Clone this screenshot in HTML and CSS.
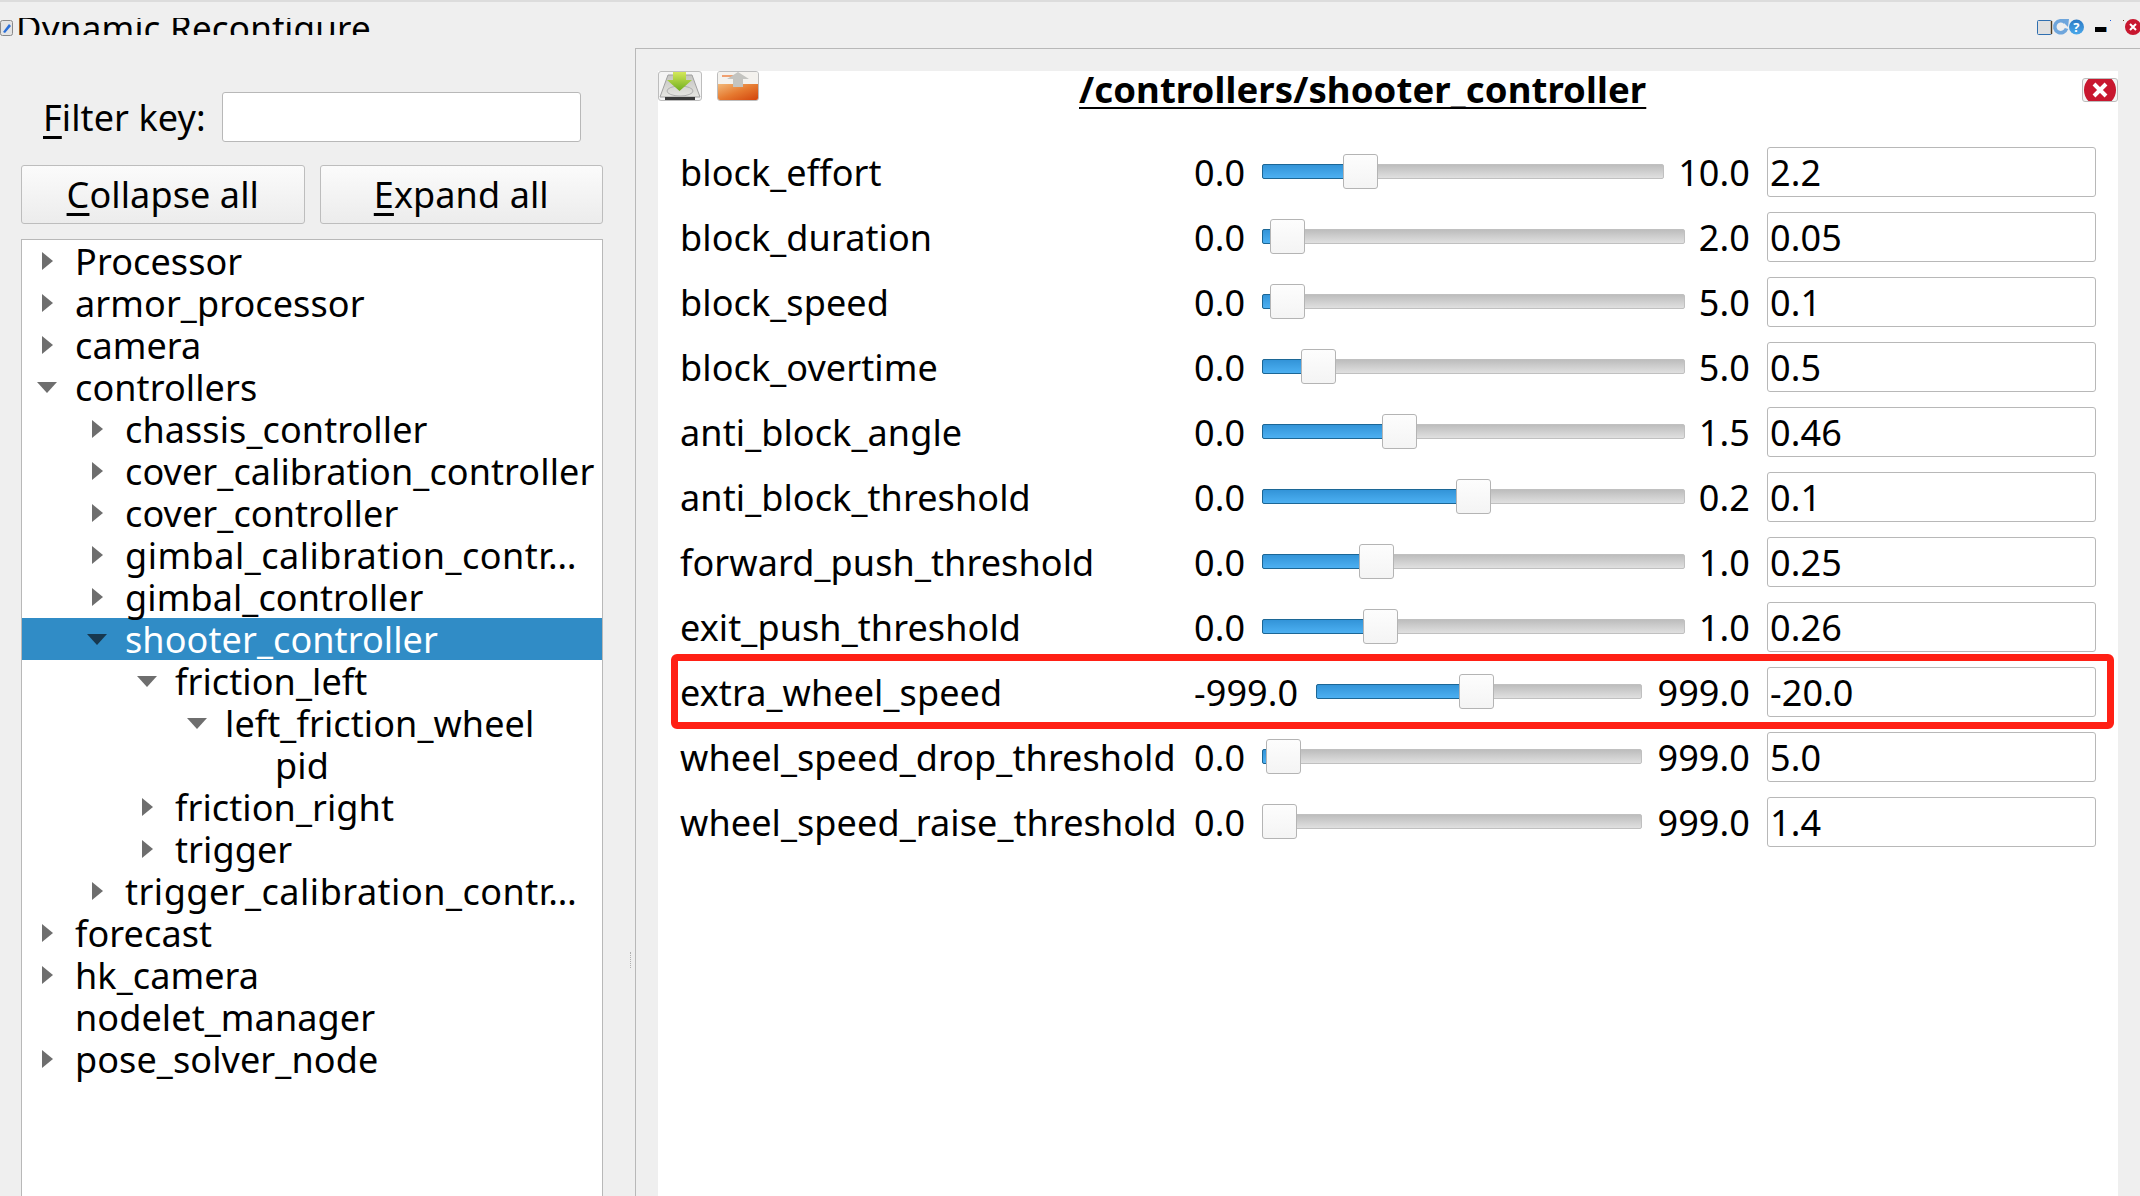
FILE: index.html
```html
<!DOCTYPE html>
<html>
<head>
    <title>Dynamic Reconfigure</title>
    <link rel="stylesheet" href="styles.css">
</head>
<body>
    <div class="window">
        <div class="titlebar">
            <svg class="app-icon" width="13" height="17" viewBox="0 0 13 17">
                <rect x="0.5" y="0.5" width="12" height="15" rx="2" fill="#e4e4e4" stroke="#8a8a8a"/>
                <path d="M3 12 L9 4 L11 6 L5 13 Z" fill="#2a6fd8"/>
            </svg>
            <div class="title-clip"><div class="title-text">Dynamic Reconfigure</div></div>
            <svg class="win-icons" width="105" height="20" viewBox="0 0 105 20">
                <defs>
                    <linearGradient id="helpBlue" x1="0" y1="0" x2="0" y2="1">
                        <stop offset="0" stop-color="#2a78c4"/>
                        <stop offset="1" stop-color="#4aa8ea"/>
                    </linearGradient>
                </defs>
                <rect x="2.5" y="2.5" width="14" height="14" rx="1" fill="#e0e0e0" stroke="#2f6fb0"/>
                <path d="M16.5 3 V16" stroke="#4a3a20" stroke-width="1.4"/>
                <path d="M30 4.5 A6 6 0 1 0 31.5 10.5" fill="none" stroke="#6fa6dc" stroke-width="3.6"/>
                <path d="M25 1 L34 1 L33 9 Z" fill="#6fa6dc"/>
                <circle cx="41.5" cy="9" r="7.5" fill="url(#helpBlue)"/>
                <text class="help-mark" x="41.5" y="13.5">?</text>
                <rect x="60" y="9" width="11" height="5" fill="#000"/>
                <rect x="71" y="9" width="1" height="5" fill="#4a90d0"/>
                <rect x="75" y="2" width="1" height="1" fill="#2060e0"/>
                <rect x="88" y="2" width="1" height="1" fill="#6a4a20"/>
                <circle cx="98" cy="9" r="8" fill="#c8172f"/>
                <path d="M95 6 L101 12 M101 6 L95 12" stroke="#fff" stroke-width="2"/>
            </svg>
        </div>

        <div class="main">
            <div class="left">
                <div class="filter">
                    <label class="filter-label"><u>F</u>ilter key:</label>
                    <input class="filter-input" type="text">
                </div>
                <div class="buttons">
                    <button class="btn"><u>C</u>ollapse all</button>
                    <button class="btn"><u>E</u>xpand all</button>
                </div>
                <div class="tree">
                    <div class="node"><span class="arrow closed"></span>Processor</div>
                    <div class="node"><span class="arrow closed"></span>armor_processor</div>
                    <div class="node"><span class="arrow closed"></span>camera</div>
                    <div class="node"><span class="arrow open"></span>controllers</div>
                    <div class="node level1"><span class="arrow closed"></span>chassis_controller</div>
                    <div class="node level1"><span class="arrow closed"></span>cover_calibration_controller</div>
                    <div class="node level1"><span class="arrow closed"></span>cover_controller</div>
                    <div class="node level1 truncated"><span class="arrow closed"></span>gimbal_calibration_contr…</div>
                    <div class="node level1"><span class="arrow closed"></span>gimbal_controller</div>
                    <div class="node level1 selected"><span class="arrow open"></span>shooter_controller</div>
                    <div class="node level2"><span class="arrow open"></span>friction_left</div>
                    <div class="node level3"><span class="arrow open"></span>left_friction_wheel</div>
                    <div class="node level4"><span class="arrow"></span>pid</div>
                    <div class="node level2"><span class="arrow closed"></span>friction_right</div>
                    <div class="node level2"><span class="arrow closed"></span>trigger</div>
                    <div class="node level1 truncated"><span class="arrow closed"></span>trigger_calibration_contr…</div>
                    <div class="node"><span class="arrow closed"></span>forecast</div>
                    <div class="node"><span class="arrow closed"></span>hk_camera</div>
                    <div class="node"><span class="arrow"></span>nodelet_manager</div>
                    <div class="node"><span class="arrow closed"></span>pose_solver_node</div>
                </div>
                <div class="splitter"></div>
            </div>

            <div class="right">
                <div class="panel">
                    <div class="header">
                        <button class="icon-btn">
                            <svg width="42" height="28" viewBox="0 0 42 28">
                                <defs>
                                    <linearGradient id="driveGrey" x1="0" y1="0" x2="0" y2="1">
                                        <stop offset="0" stop-color="#c4c4c0"/>
                                        <stop offset="1" stop-color="#e6e6e2"/>
                                    </linearGradient>
                                    <linearGradient id="arrowGreen" x1="0" y1="0" x2="0" y2="1">
                                        <stop offset="0" stop-color="#d4e85a"/>
                                        <stop offset="1" stop-color="#6fae1e"/>
                                    </linearGradient>
                                </defs>
                                <path d="M9 3 H33 L41 25 H1 Z" fill="url(#driveGrey)" stroke="#a0a0a0"/>
                                <ellipse cx="21" cy="19" rx="13" ry="5" fill="none" stroke="#b0b0b0"/>
                                <rect x="6" y="25" width="30" height="3" fill="#3a3a3a"/>
                                <path d="M14 0 H27 V8 H33 L20.5 19 L8 8 H14 Z" fill="url(#arrowGreen)"/>
                            </svg>
                        </button>
                        <button class="icon-btn folder">
                            <svg width="40" height="28" viewBox="0 0 40 28">
                                <defs>
                                    <linearGradient id="folderOrange" x1="0" y1="0" x2="1" y2="1">
                                        <stop offset="0" stop-color="#f2b878"/>
                                        <stop offset="0.5" stop-color="#e67a30"/>
                                        <stop offset="1" stop-color="#d2440c"/>
                                    </linearGradient>
                                </defs>
                                <rect x="0" y="0" width="40" height="13" fill="#f4f2ee"/>
                                <rect x="4" y="3" width="11" height="2" fill="#f0a070"/>
                                <rect x="0" y="12" width="40" height="16" fill="url(#folderOrange)"/>
                                <path d="M20 0 L31 7 H25 V15 H15 V7 H9 Z" fill="#c4c4c0"/>
                            </svg>
                        </button>
                        <div class="panel-title">/controllers/shooter_controller</div>
                        <button class="close-btn">
                            <svg width="34" height="22" viewBox="0 0 34 22">
                                <circle cx="17" cy="11" r="16" fill="#c8172f"/>
                                <path d="M11 5 L23 17 M23 5 L11 17" stroke="#fff" stroke-width="4"/>
                            </svg>
                        </button>
                    </div>

                    <div class="rows">
                        <div class="row">
                            <span class="name">block_effort</span>
                            <span class="min">0.0</span>
                            <div class="slider"><div class="fill" style="width:84px"></div><div class="handle" style="left:80px"></div></div>
                            <span class="max max-mid">10.0</span>
                            <input class="value" type="text" value="2.2">
                        </div>
                        <div class="row">
                            <span class="name">block_duration</span>
                            <span class="min">0.0</span>
                            <div class="slider"><div class="fill" style="width:11px"></div><div class="handle" style="left:7px"></div></div>
                            <span class="max">2.0</span>
                            <input class="value" type="text" value="0.05">
                        </div>
                        <div class="row">
                            <span class="name">block_speed</span>
                            <span class="min">0.0</span>
                            <div class="slider"><div class="fill" style="width:11px"></div><div class="handle" style="left:7px"></div></div>
                            <span class="max">5.0</span>
                            <input class="value" type="text" value="0.1">
                        </div>
                        <div class="row">
                            <span class="name">block_overtime</span>
                            <span class="min">0.0</span>
                            <div class="slider"><div class="fill" style="width:42px"></div><div class="handle" style="left:38px"></div></div>
                            <span class="max">5.0</span>
                            <input class="value" type="text" value="0.5">
                        </div>
                        <div class="row">
                            <span class="name">anti_block_angle</span>
                            <span class="min">0.0</span>
                            <div class="slider"><div class="fill" style="width:123px"></div><div class="handle" style="left:119px"></div></div>
                            <span class="max">1.5</span>
                            <input class="value" type="text" value="0.46">
                        </div>
                        <div class="row">
                            <span class="name">anti_block_threshold</span>
                            <span class="min">0.0</span>
                            <div class="slider"><div class="fill" style="width:197px"></div><div class="handle" style="left:193px"></div></div>
                            <span class="max">0.2</span>
                            <input class="value" type="text" value="0.1">
                        </div>
                        <div class="row">
                            <span class="name">forward_push_threshold</span>
                            <span class="min">0.0</span>
                            <div class="slider"><div class="fill" style="width:100px"></div><div class="handle" style="left:96px"></div></div>
                            <span class="max">1.0</span>
                            <input class="value" type="text" value="0.25">
                        </div>
                        <div class="row">
                            <span class="name">exit_push_threshold</span>
                            <span class="min">0.0</span>
                            <div class="slider"><div class="fill" style="width:104px"></div><div class="handle" style="left:100px"></div></div>
                            <span class="max">1.0</span>
                            <input class="value" type="text" value="0.26">
                        </div>
                        <div class="row highlighted">
                            <span class="name">extra_wheel_speed</span>
                            <span class="min min-wide">-999.0</span>
                            <div class="slider"><div class="fill" style="width:146px"></div><div class="handle" style="left:142px"></div></div>
                            <span class="max max-wide">999.0</span>
                            <input class="value" type="text" value="-20.0">
                        </div>
                        <div class="row">
                            <span class="name">wheel_speed_drop_threshold</span>
                            <span class="min">0.0</span>
                            <div class="slider"><div class="fill" style="width:7px"></div><div class="handle" style="left:3px"></div></div>
                            <span class="max max-wide">999.0</span>
                            <input class="value" type="text" value="5.0">
                        </div>
                        <div class="row">
                            <span class="name">wheel_speed_raise_threshold</span>
                            <span class="min">0.0</span>
                            <div class="slider"><div class="handle" style="left:-1px"></div></div>
                            <span class="max max-wide">999.0</span>
                            <input class="value" type="text" value="1.4">
                        </div>
                    </div>
                </div>
            </div>
        </div>
    </div>
</body>
</html>
```
FILE: styles.css
```css
body {
    margin: 0;
    font-family: "Noto Sans", sans-serif;
    font-size: 36px;
    letter-spacing: 0.1px;
    color: #000;
    background-color: #efefef;
}
.window {
    width: 2140px;
    height: 1196px;
    overflow: hidden;
    display: flex;
    flex-direction: column;
    box-sizing: border-box;
    border-top: 2px solid #dcdcdc;
}
.titlebar {
    height: 46px;
    flex: none;
    display: flex;
    align-items: flex-start;
    padding-top: 16px;
    box-sizing: border-box;
}
.app-icon {
    flex: none;
    margin-top: 2px;
    margin-right: 3px;
}
.title-clip {
    height: 17px;
    overflow: hidden;
}
.title-text {
    margin-top: -10px;
    font-size: 35px;
    letter-spacing: 0.2px;
    line-height: 40px;
    white-space: nowrap;
}
.win-icons {
    margin-left: auto;
    flex: none;
}
.help-mark {
    font-size: 13px;
    font-weight: bold;
    fill: #fff;
    text-anchor: middle;
}
.main {
    flex: 1;
    display: flex;
    min-height: 0;
}
.left {
    width: 635px;
    flex: none;
    box-sizing: border-box;
    padding-left: 21px;
    position: relative;
    display: flex;
    flex-direction: column;
}
.filter {
    display: flex;
    align-items: center;
    margin-top: 44px;
    height: 50px;
}
.filter-label {
    width: 178px;
    padding-left: 22px;
    box-sizing: border-box;
    flex: none;
    white-space: nowrap;
}
.filter-input {
    width: 359px;
    height: 50px;
    box-sizing: border-box;
    margin-left: 23px;
    border: 1px solid #b8b8b8;
    border-radius: 3px;
    background-color: #fff;
}
.buttons {
    display: flex;
    gap: 15px;
    margin-top: 23px;
    width: 582px;
}
.btn {
    flex: 1;
    height: 59px;
    padding: 0;
    font-family: inherit;
    font-size: 36px;
    letter-spacing: inherit;
    color: #000;
    border: 1px solid #bdbdbd;
    border-radius: 3px;
    background: linear-gradient(#fbfbfb, #ececec);
}
u {
    text-underline-offset: 5px;
    text-decoration-thickness: 3px;
}
.tree {
    flex: 1;
    width: 582px;
    box-sizing: border-box;
    margin-top: 15px;
    background-color: #fff;
    border: 1px solid #b8b8b8;
    border-bottom: none;
}
.node {
    height: 42px;
    display: flex;
    align-items: center;
    padding-left: 14px;
    white-space: nowrap;
}
.level1 { padding-left: 64px; }
.level2 { padding-left: 114px; }
.level3 { padding-left: 164px; }
.level4 { padding-left: 214px; }
.truncated {
    letter-spacing: 0.5px;
}
.arrow {
    width: 22px;
    height: 20px;
    margin-right: 17px;
    flex: none;
    display: flex;
    align-items: center;
    justify-content: center;
}
.arrow.closed::before {
    content: "";
    border-left: 11px solid #6e6e6e;
    border-top: 9px solid transparent;
    border-bottom: 9px solid transparent;
}
.arrow.open::before {
    content: "";
    border-top: 11px solid #6e6e6e;
    border-left: 10px solid transparent;
    border-right: 10px solid transparent;
}
.selected {
    background-color: #308cc6;
    color: #fff;
}
.selected .arrow.open::before {
    border-top-color: #17384f;
}
.splitter {
    position: absolute;
    left: 630px;
    top: 904px;
    height: 16px;
    border-left: 1px dotted #b0b0b0;
}
.right {
    flex: 1;
    box-sizing: border-box;
    border-top: 1px solid #b8b8b8;
    border-left: 1px solid #b8b8b8;
    padding: 22px 22px 0 22px;
    display: flex;
    min-width: 0;
}
.panel {
    flex: 1;
    background-color: #fff;
}
.header {
    height: 76px;
    display: flex;
    align-items: flex-start;
}
.icon-btn {
    width: 44px;
    height: 30px;
    padding: 0;
    border: 1px solid #bdbdbd;
    border-radius: 3px;
    background-color: #f4f4f4;
    display: flex;
    overflow: hidden;
}
.folder {
    width: 42px;
    margin-left: 15px;
}
.panel-title {
    margin-left: 320px;
    font-size: 36.5px;
    font-weight: bold;
    line-height: 36px;
    text-decoration: underline;
    text-decoration-thickness: 2px;
    text-underline-offset: 4px;
    white-space: nowrap;
}
.close-btn {
    width: 36px;
    height: 24px;
    margin-top: 7px;
    margin-left: auto;
    padding: 0;
    border: 1px solid #bdbdbd;
    border-radius: 3px;
    background-color: #f4f4f4;
    display: flex;
    overflow: hidden;
}
.rows {
    display: flex;
    flex-direction: column;
    gap: 15px;
    padding: 0 22px 0 22px;
}
.row {
    height: 50px;
    display: flex;
    align-items: center;
    position: relative;
}
.highlighted::after {
    content: "";
    position: absolute;
    top: -13px;
    bottom: -12px;
    left: -9px;
    right: -18px;
    border: 7px solid #ff2015;
    border-radius: 6px;
}
.name {
    width: 514px;
    flex: none;
    white-space: nowrap;
}
.min {
    width: 68px;
    flex: none;
}
.min-wide {
    width: 122px;
}
.max {
    width: 65px;
    flex: none;
    text-align: right;
}
.max-mid {
    width: 86px;
}
.max-wide {
    width: 108px;
}
.slider {
    flex: 1;
    height: 15px;
    margin-bottom: 1px;
    position: relative;
    box-sizing: border-box;
    border: 1px solid #c0c0c0;
    border-radius: 2px;
    background: linear-gradient(#bdbdbd, #e0e0e0);
}
.fill {
    height: 15px;
    margin: -1px 0 0 -1px;
    box-sizing: border-box;
    border: 1px solid #1c6796;
    border-radius: 2px;
    background: linear-gradient(#3394d8, #4cb0f2);
}
.handle {
    position: absolute;
    top: -11px;
    width: 35px;
    height: 35px;
    box-sizing: border-box;
    border: 1px solid #b4b4b4;
    border-radius: 3px;
    background: linear-gradient(#fdfdfd, #f4f4f4);
}
.value {
    width: 329px;
    height: 50px;
    flex: none;
    margin-left: 17px;
    padding: 0 2px;
    box-sizing: border-box;
    font-family: inherit;
    font-size: 36px;
    letter-spacing: inherit;
    color: #000;
    border: 1px solid #b8b8b8;
    border-radius: 3px;
    background-color: #fff;
}
```
